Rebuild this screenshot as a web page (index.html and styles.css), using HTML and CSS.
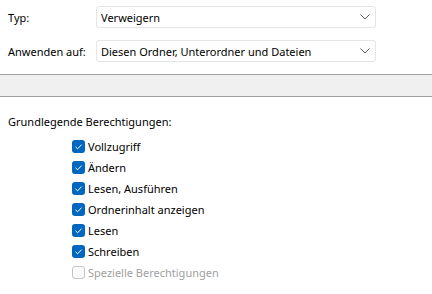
FILE: index.html
```html
<!DOCTYPE html>
<html lang="de">
<head>
    <meta charset="UTF-8">
    <title>Berechtigungseintrag</title>
    <link rel="stylesheet" href="styles.css">
</head>
<body>

<div class="fields">
    <div class="field-row">
        <label class="field-label">Typ:</label>
        <div class="combo">
            <span class="combo-value">Verweigern</span>
            <svg class="chevron" width="10" height="6" viewBox="0 0 10 6"><path d="M0.5 0.5 L5 5 L9.5 0.5" fill="none" stroke="#5f5f5f" stroke-width="1"/></svg>
        </div>
    </div>
    <div class="field-row">
        <label class="field-label">Anwenden auf:</label>
        <div class="combo">
            <span class="combo-value">Diesen Ordner, Unterordner und Dateien</span>
            <svg class="chevron" width="10" height="6" viewBox="0 0 10 6"><path d="M0.5 0.5 L5 5 L9.5 0.5" fill="none" stroke="#5f5f5f" stroke-width="1"/></svg>
        </div>
    </div>
</div>

<div class="band"></div>

<div class="permissions">
    <p class="perm-title">Grundlegende Berechtigungen:</p>
    <ul class="perm-list">
        <li class="perm"><span class="box checked"></span>Vollzugriff</li>
        <li class="perm"><span class="box checked"></span>Ändern</li>
        <li class="perm"><span class="box checked"></span>Lesen, Ausführen</li>
        <li class="perm"><span class="box checked"></span>Ordnerinhalt anzeigen</li>
        <li class="perm"><span class="box checked"></span>Lesen</li>
        <li class="perm"><span class="box checked"></span>Schreiben</li>
        <li class="perm disabled"><span class="box"></span>Spezielle Berechtigungen</li>
    </ul>
</div>

</body>
</html>
```

FILE: styles.css
```css
body {
    margin: 0;
    background: #fff;
    font-family: "Noto Sans", "Open Sans", sans-serif;
    font-size: 11px;
    color: #000;
}
.fields {
    padding: 6px 0 0 0;
}
.field-row {
    display: flex;
    align-items: center;
    height: 22px;
    margin-bottom: 12px;
}
.field-label {
    width: 88px;
    padding-left: 8px;
}
.combo {
    width: 280px;
    height: 22px;
    box-sizing: border-box;
    border: 1px solid #e5e5e5;
    border-radius: 3px;
    display: flex;
    align-items: center;
    justify-content: space-between;
    padding: 0 5px 0 4px;
}
.band {
    height: 21px;
    background: #f0f0f0;
    border-top: 1px solid #a0a0a0;
    border-bottom: 1px solid #a0a0a0;
}
.permissions {
    padding: 17px 0 0 8px;
}
.perm-title {
    margin: 0 0 6px 0;
    line-height: 16px;
}
.perm-list {
    list-style: none;
    margin: 0;
    padding: 0 0 0 64px;
}
.perm {
    display: flex;
    align-items: center;
    height: 21px;
}
.box {
    width: 13px;
    height: 13px;
    box-sizing: border-box;
    border: 1px solid #c5c5c5;
    border-radius: 3px;
    background: #fafafa;
    margin-right: 3px;
}
.box.checked {
    border: none;
    background: #0067c0 url("data:image/svg+xml,%3Csvg xmlns='http://www.w3.org/2000/svg' width='13' height='13'%3E%3Cpath d='M3.5 6.8 L5.6 8.8 L9.6 4.6' fill='none' stroke='white' stroke-width='1'/%3E%3C/svg%3E") no-repeat;
}
.perm.disabled {
    color: #a0a0a0;
}
```
